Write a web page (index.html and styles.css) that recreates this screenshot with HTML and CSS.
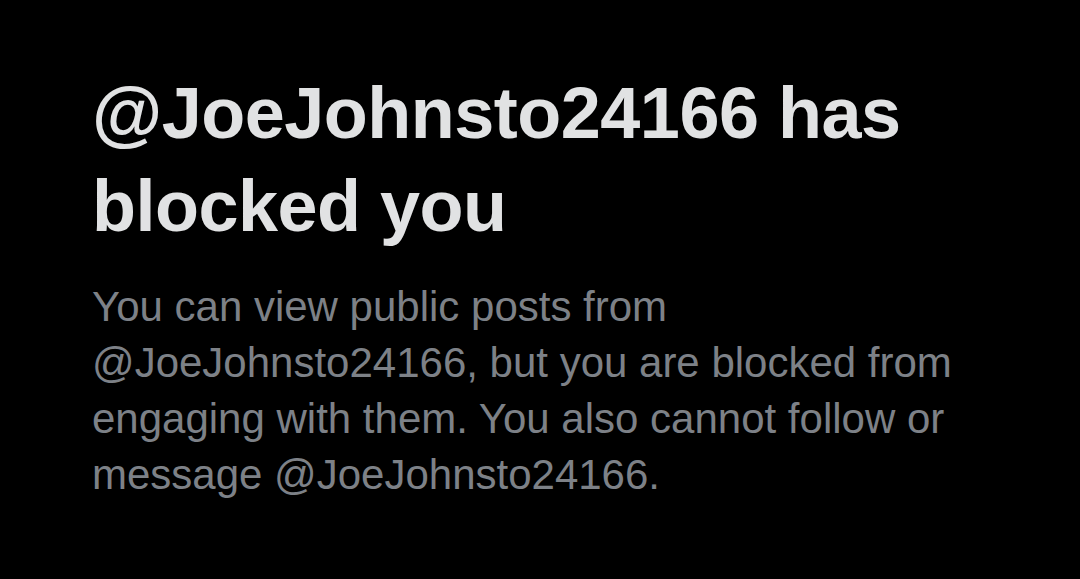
FILE: index.html
```html
<!DOCTYPE html>
<html lang="en">
<head>
    <meta charset="UTF-8">
    <meta name="viewport" content="width=device-width, initial-scale=1.0">
    <title>Blocked</title>
    <link rel="stylesheet" href="styles.css">
</head>
<body>
    <div class="blocked">
        <h1 class="blocked-title">@JoeJohnsto24166 has blocked you</h1>
        <p class="blocked-text">You can view public posts from @JoeJohnsto24166, but you are blocked from engaging with them. You also cannot follow or message @JoeJohnsto24166.</p>
    </div>
</body>
</html>
```

FILE: styles.css
```css
:root {
    --bg-color: #000000;
    --primary-text: #e1e2e3;
    --secondary-text: #7d8187;
}

* {
    box-sizing: border-box;
    margin: 0;
    padding: 0;
}

body {
    font-family: "Liberation Sans", Arial, sans-serif;
    background-color: var(--bg-color);
    min-height: 100vh;
}

.blocked {
    padding: 67px 0 0 92px;
    max-width: 1000px;
}

.blocked-title {
    color: var(--primary-text);
    font-size: 72px;
    line-height: 93px;
    font-weight: 700;
    letter-spacing: -0.5px;
    max-width: 840px;
}

.blocked-text {
    margin-top: 26px;
    color: var(--secondary-text);
    font-size: 42px;
    line-height: 56px;
    max-width: 900px;
}
```
